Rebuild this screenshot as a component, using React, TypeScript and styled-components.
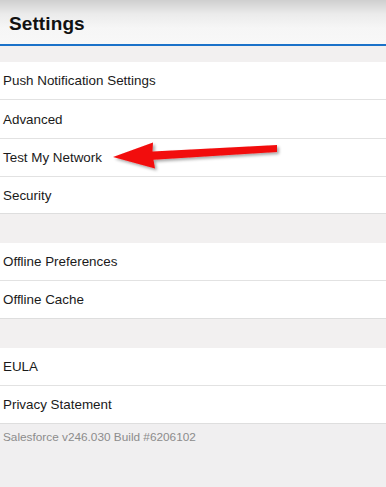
import React from "react";
import styled, { createGlobalStyle } from "styled-components";

const Global = createGlobalStyle`
  html, body { margin: 0; padding: 0; background: #f0eff0; }
  body { font-family: "Liberation Sans", Arial, sans-serif; }
  * { box-sizing: border-box; }
`;

const Page = styled.div`
  position: relative;
  width: 386px;
  height: 487px;
  background: #f0eff0;
  overflow: hidden;
`;

const Header = styled.header`
  height: 46px;
  padding-left: 9px;
  padding-top: 3px;
  display: flex;
  align-items: center;
  background: linear-gradient(#cfcfcf 0px, #ebebeb 14px, #f6f6f6 28px, #f8f8f8 100%);
  border-bottom: 2px solid #1b72c9;
`;

const Title = styled.h1`
  margin: 0;
  font-size: 19px;
  font-weight: 700;
  color: #111;
  letter-spacing: 0.1px;
`;

const Gap = styled.div<{ $h: number }>`
  height: ${(p) => p.$h}px;
  background: #f2f0f0;
`;

const Group = styled.div`
  background: #fff;
  border-bottom: 1px solid #dedede;
`;

const Row = styled.div<{ $h?: number }>`
  height: ${(p) => p.$h ?? 38}px;
  display: flex;
  align-items: center;
  padding-left: 3px;
  font-size: 13.4px;
  color: #1a1a1a;
  border-bottom: 1px solid #e2e2e2;
  &:last-child { border-bottom: none; height: ${(p) => (p.$h ?? 38) - 1}px; }
`;

const Footer = styled.div`
  padding: 6px 3px 0;
  font-size: 11.8px;
  color: #8c8c8c;
`;

const Arrow = styled.svg`
  position: absolute;
  left: 0;
  top: 0;
  pointer-events: none;
`;

const groups: { label: string; h?: number }[][] = [
  [
    { label: "Push Notification Settings" },
    { label: "Advanced", h: 39 },
    { label: "Test My Network" },
    { label: "Security", h: 37 },
  ],
  [{ label: "Offline Preferences" }, { label: "Offline Cache" }],
  [{ label: "EULA" }, { label: "Privacy Statement" }],
];

export default function App() {
  return (
    <Page>
      <Global />
      <Header>
        <Title>Settings</Title>
      </Header>
      <Gap $h={16} />
      {groups.map((g, i) => (
        <React.Fragment key={i}>
          {i > 0 && <Gap $h={29} />}
          <Group>
            {g.map((r) => (
              <Row key={r.label} $h={r.h}>
                {r.label}
              </Row>
            ))}
          </Group>
        </React.Fragment>
      ))}
      <Footer>Salesforce v246.030 Build #6206102</Footer>
      <Arrow width="386" height="487" viewBox="0 0 386 487">
        <defs>
          <filter id="sh" x="-20%" y="-50%" width="140%" height="200%">
            <feDropShadow dx="2" dy="2" stdDeviation="1.5" floodColor="#000" floodOpacity="0.35" />
          </filter>
        </defs>
        <polygon
          points="113,157 153,142.5 152.5,151.5 277,145 277,152 153.5,159.8 155,168.5"
          fill="#f20d0d"
          filter="url(#sh)"
        />
      </Arrow>
    </Page>
  );
}
